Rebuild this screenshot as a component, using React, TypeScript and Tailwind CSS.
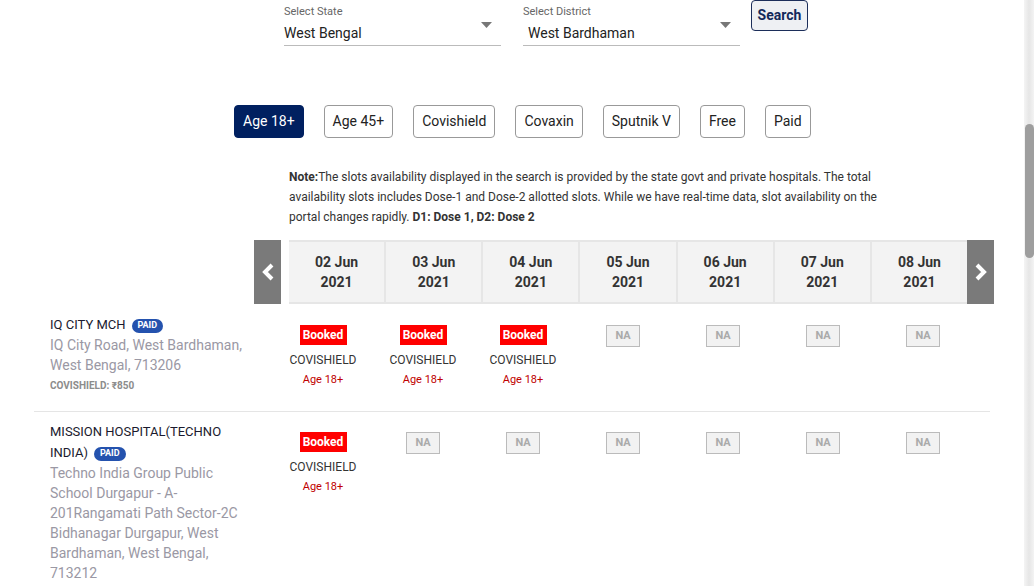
import React from "react";

const dates = ["02 Jun", "03 Jun", "04 Jun", "05 Jun", "06 Jun", "07 Jun", "08 Jun"];
const filters = ["Age 18+", "Age 45+", "Covishield", "Covaxin", "Sputnik V", "Free", "Paid"];

function Caret() {
  return (
    <svg width="11" height="6" viewBox="0 0 11 6" className="shrink-0">
      <polygon points="0,0 11,0 5.5,6" fill="#777" />
    </svg>
  );
}

function Chevron({ dir }: { dir: "l" | "r" }) {
  return (
    <svg width="14" height="18" viewBox="0 0 14 18">
      {dir === "l" ? (
        <polyline points="11,2 4,9 11,16" fill="none" stroke="#fff" strokeWidth="4" strokeLinejoin="miter" />
      ) : (
        <polyline points="3,2 10,9 3,16" fill="none" stroke="#fff" strokeWidth="4" strokeLinejoin="miter" />
      )}
    </svg>
  );
}

function Booked() {
  return (
    <div className="flex w-[100px] flex-col items-center">
      <div className="flex h-[20px] w-[47px] items-center justify-center bg-[#ff0000] text-[12px] font-bold text-white">Booked</div>
      <div className="mt-[7px] text-[12px] leading-[16px] text-[#333]">COVISHIELD</div>
      <div className="mt-[4px] text-[11px] leading-[16px] text-[#c00000]">Age 18+</div>
    </div>
  );
}

function NA() {
  return (
    <div className="flex w-[100px] flex-col items-center">
      <div className="flex h-[22px] w-[34px] items-center justify-center border border-[#bbb] bg-[#f2f2f2] text-[11px] font-bold text-[#aaa]">NA</div>
    </div>
  );
}

function Paid() {
  return (
    <span className="ml-[6px] inline-flex h-[14px] items-center rounded-full bg-[#2452ae] px-[6px] align-[1px] text-[9px] font-bold leading-none text-white">PAID</span>
  );
}

export default function App() {
  return (
    <div className="flex h-[586px] w-[1034px] overflow-hidden bg-white" style={{ fontFamily: "Roboto, 'Liberation Sans', sans-serif" }}>
      <div className="w-[1024px] shrink-0">
        {/* selects */}
        <div className="flex pl-[284px]">
          <div className="w-[217px] border-b border-[#bbb] pt-[5px]">
            <div className="text-[11px] leading-[13px] text-[#666]">Select State</div>
            <div className="flex items-start justify-between pr-[9px]">
              <div className="mt-[7px] pb-[4px] text-[14px] leading-[16px] text-[#222]">West Bengal</div>
              <div className="mt-[4px]"><Caret /></div>
            </div>
          </div>
          <div className="ml-[22px] w-[217px] border-b border-[#bbb] pt-[5px]">
            <div className="text-[11px] leading-[13px] text-[#666]">Select District</div>
            <div className="flex items-start justify-between pr-[9px]">
              <div className="mt-[7px] pb-[4px] pl-[5px] text-[14px] leading-[16px] text-[#222]">West Bardhaman</div>
              <div className="mt-[4px]"><Caret /></div>
            </div>
          </div>
          <div className="ml-[11px] flex h-[31px] w-[57px] items-center justify-center self-start rounded-[4px] border border-[#1c2e5a] bg-[#eef0f3] text-[14px] font-bold text-[#13295a]">Search</div>
        </div>

        {/* filters */}
        <div className="mt-[59px] flex gap-[20px] pl-[234px]">
          {filters.map((f, i) => (
            <div
              key={f}
              className={
                i === 0
                  ? "flex h-[33px] items-center rounded-[4px] border border-[#002060] bg-[#002060] px-[8px] text-[14px] text-white"
                  : "flex h-[33px] items-center rounded-[4px] border border-[#999] bg-white px-[8px] text-[14px] text-[#222]"
              }
            >
              {f}
            </div>
          ))}
        </div>

        {/* note */}
        <div className="ml-[289px] mt-[29px] w-[592px] text-[12px] leading-[20px] text-[#333]">
          <b>Note:</b>The slots availability displayed in the search is provided by the state govt and private hospitals. The total availability slots includes Dose-1 and Dose-2 allotted slots. While we have real-time data, slot availability on the portal changes rapidly. <b>D1: Dose 1, D2: Dose 2</b>
        </div>

        {/* date header */}
        <div className="ml-[254px] mt-[13px] flex h-[64px]">
          <div className="flex w-[27px] items-center justify-center bg-[#7a7a7a]"><Chevron dir="l" /></div>
          <div className="ml-[8px] flex w-[678px] border-y-2 border-[#e6e6e6] bg-[#f3f3f3]">
            {dates.map((d, i) => (
              <div key={d} className={(i > 0 ? "border-l-2 border-[#e6e6e6] " : "") + "flex flex-1 flex-col items-center justify-center text-[14px] font-bold leading-[20px] text-[#333]"}>
                <div>{d}</div>
                <div>2021</div>
              </div>
            ))}
          </div>
          <div className="flex w-[27px] items-center justify-center bg-[#7a7a7a]"><Chevron dir="r" /></div>
        </div>

        {/* rows */}
        <div className="ml-[34px] w-[956px]">
          <div className="flex border-b border-[#e5e5e5] pb-[14px] pt-[11px]">
            <div className="w-[239px] pl-[16px]">
              <div className="text-[13px] leading-[20px] text-[#1a1a2e]">IQ CITY MCH<Paid /></div>
              <div className="w-[200px] text-[14px] leading-[20px] text-[#9a98a4]">IQ City Road, West Bardhaman, West Bengal, 713206</div>
              <div className="text-[10px] font-bold leading-[22px] text-[#8c8c8c]">COVISHIELD: ₹850</div>
            </div>
            <div className="flex pt-[10px]">
              <Booked />
              <Booked />
              <Booked />
              <NA />
              <NA />
              <NA />
              <NA />
            </div>
          </div>
          <div className="flex pt-[9px]">
            <div className="w-[239px] pl-[16px]">
              <div className="w-[190px] text-[13px] leading-[21px] text-[#1a1a2e]">MISSION HOSPITAL(TECHNO INDIA)<Paid /></div>
              <div className="w-[200px] text-[14px] leading-[20px] text-[#9a98a4]">Techno India Group Public School Durgapur - A-201Rangamati Path Sector-2C Bidhanagar Durgapur, West Bardhaman, West Bengal, 713212</div>
            </div>
            <div className="flex pt-[11px]">
              <Booked />
              <NA />
              <NA />
              <NA />
              <NA />
              <NA />
              <NA />
            </div>
          </div>
        </div>
      </div>

      {/* fake scrollbar */}
      <div className="flex w-[10px] shrink-0 flex-col bg-gradient-to-r from-[#f4f4f4] via-[#e6e6e6] to-[#f4f4f4]">
        <div className="h-[124px]" />
        <div className="mx-auto h-[134px] w-[9px] rounded-full bg-[#9e9e9e]" />
      </div>
    </div>
  );
}
